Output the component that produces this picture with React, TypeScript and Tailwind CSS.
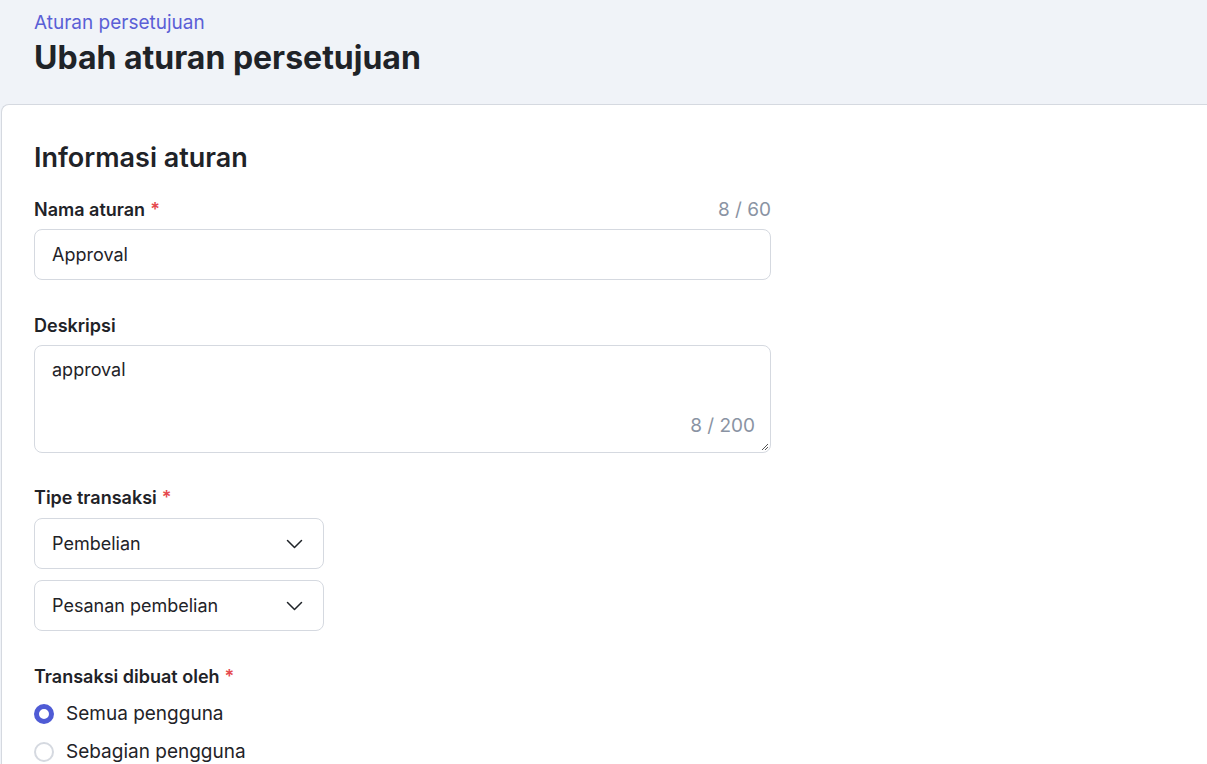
const Label = ({ text, required }: { text: string; required?: boolean }) => (
    <div className="text-[18px] leading-[24px] font-semibold text-[#1f2328]">
        {text}
        {required && <span className="text-[#e5484d] ml-[5px]">*</span>}
    </div>
);

const Chevron = () => (
    <svg width="17" height="10" viewBox="0 0 17 10" fill="none">
        <path d="M1.5 1.5 L8.5 8.5 L15.5 1.5" stroke="#1f2328" strokeWidth="1.5" strokeLinecap="round" strokeLinejoin="round" />
    </svg>
);

const Select = ({ value }: { value: string }) => (
    <div className="w-[290px] h-[51px] border border-[#d5d9e0] rounded-lg flex items-center justify-between pl-[17px] pr-[20px] text-[18px] text-[#1f2328]">
        <span>{value}</span>
        <Chevron />
    </div>
);

const Radio = ({ label, checked }: { label: string; checked?: boolean }) => (
    <label className="flex items-center gap-[12px] text-[19px] text-[#1f2328] h-[38px]">
        {checked ? (
            <span className="w-[20px] h-[20px] rounded-full border-[5px] border-[#4f5bd5] bg-white"></span>
        ) : (
            <span className="w-[20px] h-[20px] rounded-full border-2 border-[#d5d9e0] bg-white"></span>
        )}
        {label}
    </label>
);

export default function App() {
    return (
        <div className="w-[1207px] h-[764px] overflow-hidden bg-[#f0f3f8] flex flex-col" style={{ fontFamily: "Inter, 'Noto Sans', sans-serif" }}>
            <div className="px-[34px] pt-[11px] h-[104px] shrink-0">
                <div className="text-[19px] text-[#5b5fd6] leading-[24px]">Aturan persetujuan</div>
                <h1 className="text-[32px] font-bold text-[#1f2328] leading-[40px] mt-[3px]">Ubah aturan persetujuan</h1>
            </div>
            <div className="flex-1 ml-[1px] bg-white border-l border-t border-[#d5d9e0] rounded-tl-lg px-[32px] pt-[36px]">
                <h2 className="text-[27px] font-semibold text-[#1f2328] leading-[34px]">Informasi aturan</h2>

                <div className="w-[737px] mt-[23px]">
                    <div className="flex justify-between items-end">
                        <Label text="Nama aturan" required />
                        <span className="text-[19px] leading-[24px] text-[#8a93a3]">8 / 60</span>
                    </div>
                    <div className="mt-[7px] h-[51px] border border-[#d5d9e0] rounded-lg flex items-center px-[17px] text-[18px] text-[#1f2328]">
                        Approval
                    </div>
                </div>

                <div className="w-[737px] mt-[34px]">
                    <Label text="Deskripsi" />
                    <div className="relative mt-[7px] h-[108px] border border-[#d5d9e0] rounded-lg px-[17px] pt-[10px] text-[18px] text-[#1f2328]">
                        approval
                        <span className="absolute right-[15px] bottom-[12px] text-[19px] text-[#8a93a3]">8 / 200</span>
                        <svg className="absolute right-[1px] bottom-[1px]" width="10" height="10" viewBox="0 0 10 10">
                            <path d="M9 3 L3 9 M9 6 L6 9" stroke="#555" strokeWidth="1" />
                        </svg>
                    </div>
                </div>

                <div className="mt-[33px]">
                    <Label text="Tipe transaksi" required />
                    <div className="flex flex-col gap-[11px] mt-[8px]">
                        <Select value="Pembelian" />
                        <Select value="Pesanan pembelian" />
                    </div>
                </div>

                <div className="mt-[34px]">
                    <Label text="Transaksi dibuat oleh" required />
                    <div className="flex flex-col mt-[6px]">
                        <Radio label="Semua pengguna" checked />
                        <Radio label="Sebagian pengguna" />
                    </div>
                </div>
            </div>
        </div>
    );
}
